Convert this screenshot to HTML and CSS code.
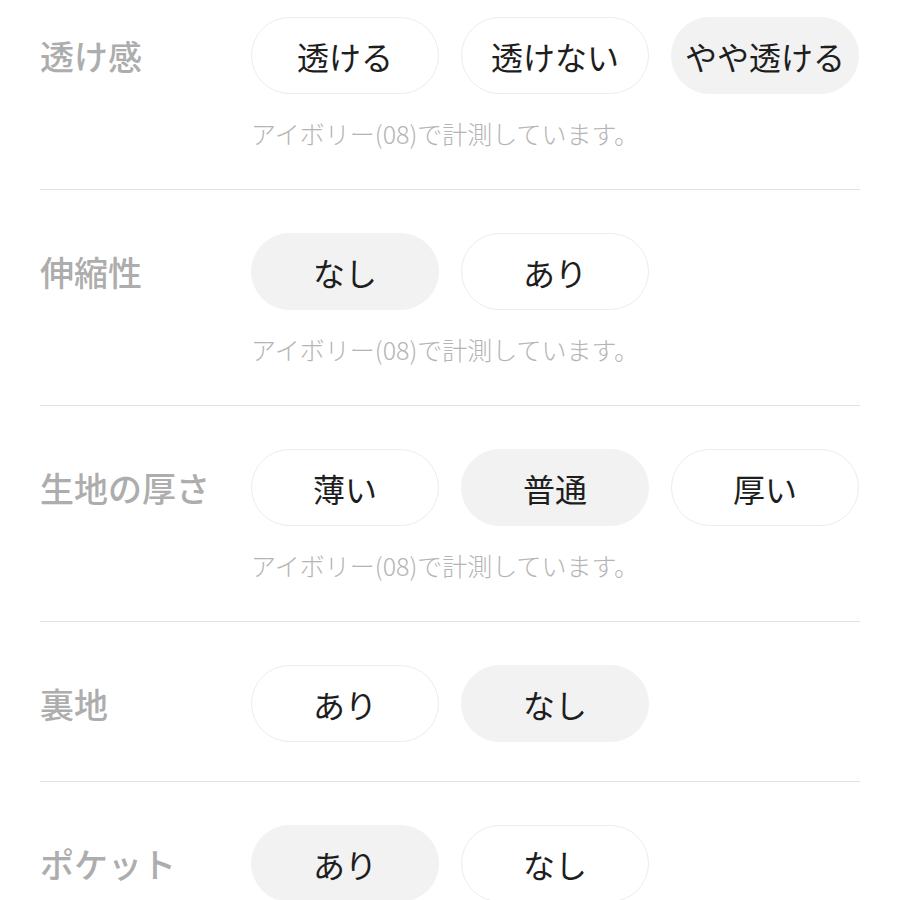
FILE: index.html
```html
<!DOCTYPE html>
<html lang="ja">
<head>
<meta charset="utf-8">
<link rel="stylesheet" href="styles.css">
</head>
<body>
<div class="list">
  <section class="row">
    <div class="label">透け感</div>
    <div class="body">
      <div class="options">
        <span class="opt">透ける</span>
        <span class="opt">透けない</span>
        <span class="opt on">やや透ける</span>
      </div>
      <p class="note">アイボリー(08)で計測しています。</p>
    </div>
  </section>
  <section class="row">
    <div class="label">伸縮性</div>
    <div class="body">
      <div class="options">
        <span class="opt on">なし</span>
        <span class="opt">あり</span>
      </div>
      <p class="note">アイボリー(08)で計測しています。</p>
    </div>
  </section>
  <section class="row">
    <div class="label">生地の厚さ</div>
    <div class="body">
      <div class="options">
        <span class="opt">薄い</span>
        <span class="opt on">普通</span>
        <span class="opt">厚い</span>
      </div>
      <p class="note">アイボリー(08)で計測しています。</p>
    </div>
  </section>
  <section class="row">
    <div class="label">裏地</div>
    <div class="body">
      <div class="options">
        <span class="opt">あり</span>
        <span class="opt on">なし</span>
      </div>
    </div>
  </section>
  <section class="row last">
    <div class="label">ポケット</div>
    <div class="body">
      <div class="options">
        <span class="opt on">あり</span>
        <span class="opt">なし</span>
      </div>
    </div>
  </section>
</div>
</body>
</html>
```
FILE: styles.css
```css
html, body {
  margin: 0;
  padding: 0;
  background: #ffffff;
}
body {
  font-family: "Noto Sans CJK JP", "Noto Sans", sans-serif;
  overflow: hidden;
  height: 900px;
}
.list {
  padding: 0 40px;
}
.row {
  display: grid;
  grid-template-columns: 211px 1fr;
  padding: 43px 0 39px;
  border-bottom: 1px solid #e2e2e2;
}
.row:first-child {
  padding-top: 17px;
}
.row.last {
  border-bottom: none;
}
.label {
  height: 77px;
  display: flex;
  align-items: center;
  font-size: 34px;
  font-weight: 500;
  color: #adadad;
}
.options {
  display: flex;
  gap: 22px;
}
.opt {
  box-sizing: border-box;
  width: 188px;
  height: 77px;
  border-radius: 39px;
  border: 1px solid #ececec;
  background: #fff;
  display: flex;
  align-items: center;
  justify-content: center;
  font-size: 32px;
  color: #1e1e1e;
  white-space: nowrap;
}
.opt.on {
  background: #f2f2f2;
  border-color: #f2f2f2;
}
.note {
  margin: 22px 0 0;
  font-size: 25px;
  line-height: 34px;
  color: #b4b4b4;
  font-weight: 300;
}
```
